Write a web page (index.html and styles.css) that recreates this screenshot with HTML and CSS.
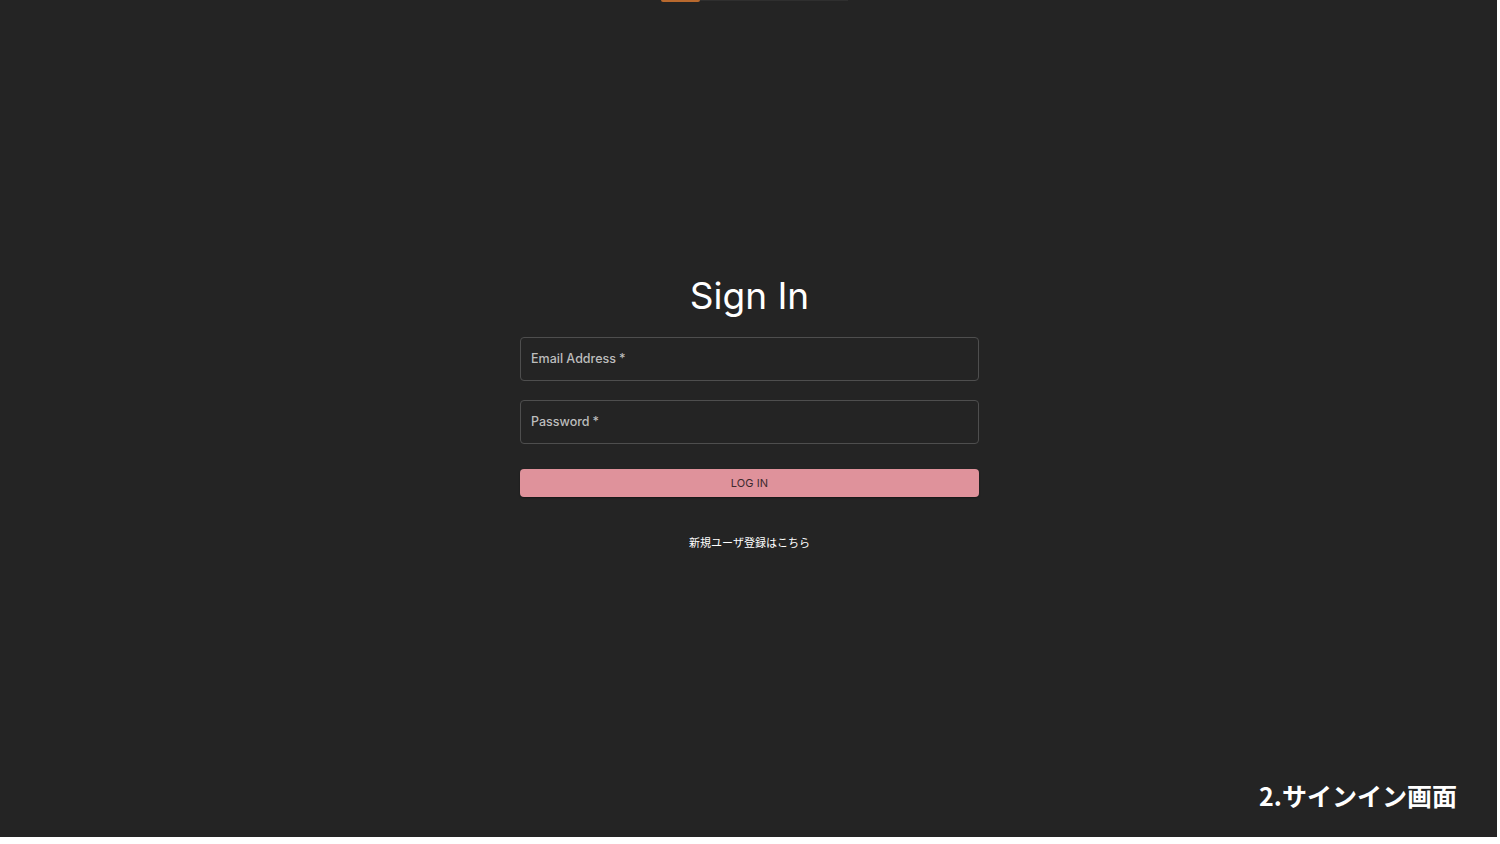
FILE: index.html
```html
<!DOCTYPE html>
<html lang="ja">
<head>
<meta charset="utf-8">
<title>Sign In</title>
<link rel="stylesheet" href="styles.css">
</head>
<body>
<div class="screen">
  <div class="top-tab"><span class="tab-active"></span><span class="tab-line"></span></div>
  <main class="signin">
    <h1 class="title">Sign In</h1>
    <div class="field"><span class="label">Email Address<span class="req">*</span></span></div>
    <div class="field field-2"><span class="label">Password<span class="req">*</span></span></div>
    <button class="login">LOG IN</button>
    <a class="signup">新規ユーザ登録はこちら</a>
  </main>
  <div class="caption">2.サインイン画面</div>
</div>
</body>
</html>
```
FILE: styles.css
```css
html, body {
  margin: 0;
  padding: 0;
  background: #ffffff;
}
body {
  width: 1500px;
  height: 844px;
  overflow: hidden;
  font-family: Inter, "Noto Sans CJK JP", sans-serif;
}
.screen {
  position: relative;
  width: 1497px;
  height: 837px;
  background: #242424;
  display: flex;
  flex-direction: column;
  align-items: center;
}
.top-tab {
  position: absolute;
  top: 0;
  left: 661px;
  display: flex;
  align-items: flex-start;
}
.tab-active {
  width: 39px;
  height: 2px;
  background: #b8692e;
  border-radius: 0 0 3px 3px;
}
.tab-line {
  width: 148px;
  height: 1px;
  background: #2f2f2f;
}
.signin {
  margin-top: 272px;
  margin-left: 2px;
  width: 459px;
  display: flex;
  flex-direction: column;
  align-items: stretch;
}
.title {
  margin: 0;
  font-family: Inter, sans-serif;
  font-weight: 400;
  font-size: 37px;
  line-height: 48px;
  color: #ffffff;
  text-align: center;
}
.field {
  margin-top: 17px;
  height: 44px;
  box-sizing: border-box;
  border: 1px solid #4e4e4e;
  border-radius: 4px;
  display: flex;
  align-items: center;
  padding-left: 10px;
  padding-bottom: 2px;
}
.field-2 {
  margin-top: 19px;
}
.label {
  font-family: Inter, sans-serif;
  font-size: 12.5px;
  font-weight: 500;
  color: #bdbdbd;
}
.req {
  margin-left: 3px;
}
.login {
  margin-top: 25px;
  height: 28px;
  border: none;
  border-radius: 4px;
  background: #df929b;
  color: #3d2a2e;
  font-family: Inter, sans-serif;
  font-size: 11px;
  letter-spacing: 0.1px;
  padding: 0;
  box-shadow: 0 1px 2px rgba(0,0,0,0.4);
}
.signup {
  margin-top: 37px;
  font-family: Inter, "Noto Sans CJK JP", sans-serif;
  font-size: 11px;
  line-height: 18px;
  color: #ffffff;
  text-align: center;
}
.caption {
  position: absolute;
  right: 40px;
  top: 777px;
  font-family: "Noto Sans CJK JP", sans-serif;
  font-weight: 700;
  font-size: 25px;
  line-height: 36px;
  color: #ffffff;
}
```
